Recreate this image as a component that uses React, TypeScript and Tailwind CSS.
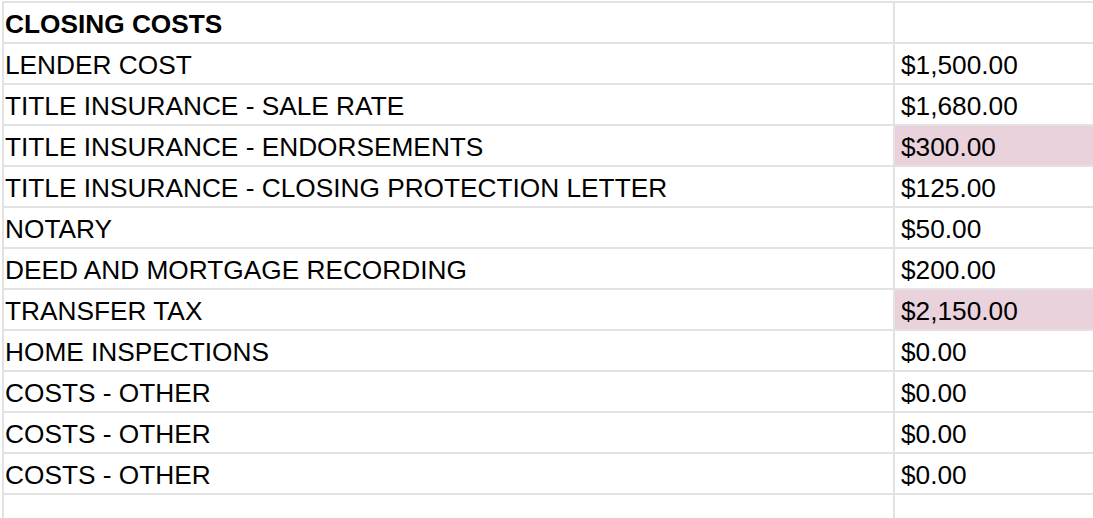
const rows: { label: string; value: string; flagged?: boolean }[] = [
  { label: "LENDER COST", value: "$1,500.00" },
  { label: "TITLE INSURANCE - SALE RATE", value: "$1,680.00" },
  { label: "TITLE INSURANCE - ENDORSEMENTS", value: "$300.00", flagged: true },
  { label: "TITLE INSURANCE - CLOSING PROTECTION LETTER", value: "$125.00" },
  { label: "NOTARY", value: "$50.00" },
  { label: "DEED AND MORTGAGE RECORDING", value: "$200.00" },
  { label: "TRANSFER TAX", value: "$2,150.00", flagged: true },
  { label: "HOME INSPECTIONS", value: "$0.00" },
  { label: "COSTS - OTHER", value: "$0.00" },
  { label: "COSTS - OTHER", value: "$0.00" },
  { label: "COSTS - OTHER", value: "$0.00" },
];

function Row({
  label,
  value,
  bold,
  flagged,
}: {
  label: string;
  value: string;
  bold?: boolean;
  flagged?: boolean;
}) {
  return (
    <div className="flex h-[41px] border-b-2 border-[#e2e2e2]">
      <div
        className={`w-[891px] shrink-0 border-r-2 border-[#e2e2e2] pl-px flex items-center pt-[3px] ${
          bold ? "font-bold" : ""
        }`}
      >
        {label}
      </div>
      <div
        className={`flex-1 pl-[6px] flex items-center pt-[3px] ${
          flagged ? "bg-[#e9d2dc]" : ""
        }`}
      >
        {value}
      </div>
    </div>
  );
}

export default function App() {
  return (
    <div className="w-[1093px] h-[518px] overflow-hidden bg-white pt-px pl-[2px] font-['Liberation_Sans',Arial,sans-serif] text-[26.25px] leading-none text-black">
      <div className="border-t-2 border-l-2 border-[#e2e2e2]">
        <Row label="CLOSING COSTS" value="" bold />
        {rows.map((r, i) => (
          <Row key={i} label={r.label} value={r.value} flagged={r.flagged} />
        ))}
        <Row label="" value="" />
      </div>
    </div>
  );
}
